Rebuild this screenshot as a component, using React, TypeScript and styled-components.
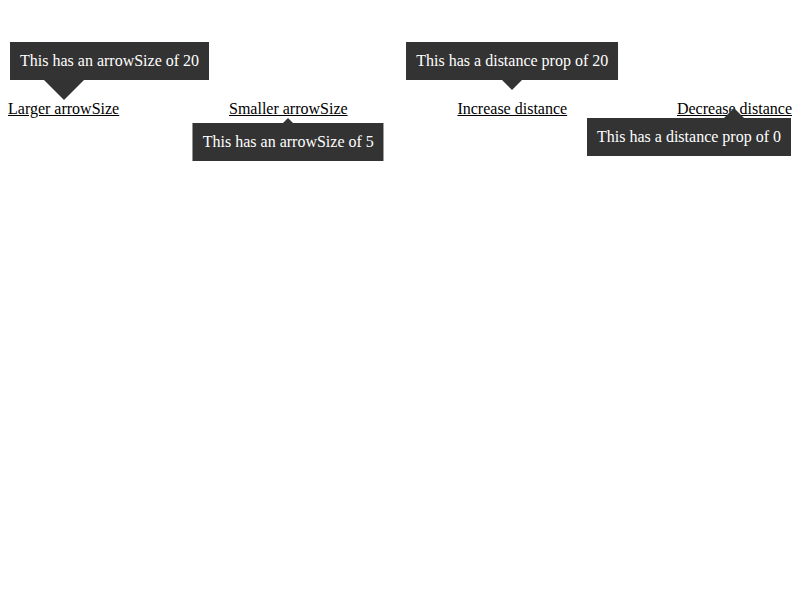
import React from "react";
import styled, { createGlobalStyle } from "styled-components";

const GlobalStyle = createGlobalStyle`
  html, body {
    padding: 0;
    background: #ffffff;
  }
  body {
    margin: 8px;
    font-family: "Liberation Serif", "Times New Roman", serif;
    font-size: 16px;
    color: #000000;
  }
`;

const Page = styled.div`
  min-height: calc(100vh - 16px);
`;

const Row = styled.div`
  display: flex;
  justify-content: space-between;
  align-items: flex-start;
  padding-top: 92px;
`;

const Target = styled.span`
  position: relative;
  display: inline-block;
  line-height: 18px;
`;

const Link = styled.a`
  color: #000000;
  text-decoration: underline;
  cursor: pointer;
`;

type Placement = "up" | "down";

const Bubble = styled.div<{
  $placement: Placement;
  $distance: number;
  $align: string;
}>`
  position: absolute;
  z-index: 2;
  box-sizing: border-box;
  background: #333333;
  color: #ffffff;
  font-family: "Liberation Serif", "Times New Roman", serif;
  font-size: 16px;
  padding: 10px;
  line-height: 18px;
  white-space: nowrap;
  top: ${(p) => (p.$placement === "down" ? `calc(100% + ${p.$distance}px)` : "auto")};
  bottom: ${(p) => (p.$placement === "up" ? `calc(100% + ${p.$distance}px)` : "auto")};
  ${(p) => p.$align}
`;

const Arrow = styled.span<{ $placement: Placement; $size: number; $distance: number }>`
  position: absolute;
  z-index: 3;
  left: 50%;
  width: 0;
  height: 0;
  transform: translateX(-50%);
  border-left: ${(p) => p.$size}px solid transparent;
  border-right: ${(p) => p.$size}px solid transparent;
  border-top: ${(p) => (p.$placement === "up" ? `${p.$size}px solid #333333` : "0")};
  border-bottom: ${(p) => (p.$placement === "down" ? `${p.$size}px solid #333333` : "0")};
  top: ${(p) => (p.$placement === "down" ? `calc(100% + ${p.$distance - p.$size}px)` : "auto")};
  bottom: ${(p) => (p.$placement === "up" ? `calc(100% + ${p.$distance - p.$size}px)` : "auto")};
`;

type TipProps = {
  label: string;
  content: string;
  placement: Placement;
  arrowSize?: number;
  distance?: number;
  left?: number;
  right?: number;
};

function Tip({ label, content, placement, arrowSize = 10, distance, left, right }: TipProps) {
  const d = distance ?? arrowSize;
  const align =
    left !== undefined
      ? `left: ${left}px;`
      : right !== undefined
      ? `right: ${right}px;`
      : `left: 50%; transform: translateX(-50%);`;
  return (
    <Target>
      <Link>{label}</Link>
      <Bubble $placement={placement} $distance={d} $align={align}>
        {content}
      </Bubble>
      <Arrow $placement={placement} $size={arrowSize} $distance={d} />
    </Target>
  );
}

export default function App() {
  return (
    <>
      <GlobalStyle />
      <Page>
        <Row>
          <Tip
            label="Larger arrowSize"
            content="This has an arrowSize of 20"
            placement="up"
            arrowSize={20}
            left={2}
          />
          <Tip
            label="Smaller arrowSize"
            content="This has an arrowSize of 5"
            placement="down"
            arrowSize={5}
          />
          <Tip
            label="Increase distance"
            content="This has a distance prop of 20"
            placement="up"
            distance={20}
          />
          <Tip
            label="Decrease distance"
            content="This has a distance prop of 0"
            placement="down"
            distance={0}
            right={1}
          />
        </Row>
      </Page>
    </>
  );
}
